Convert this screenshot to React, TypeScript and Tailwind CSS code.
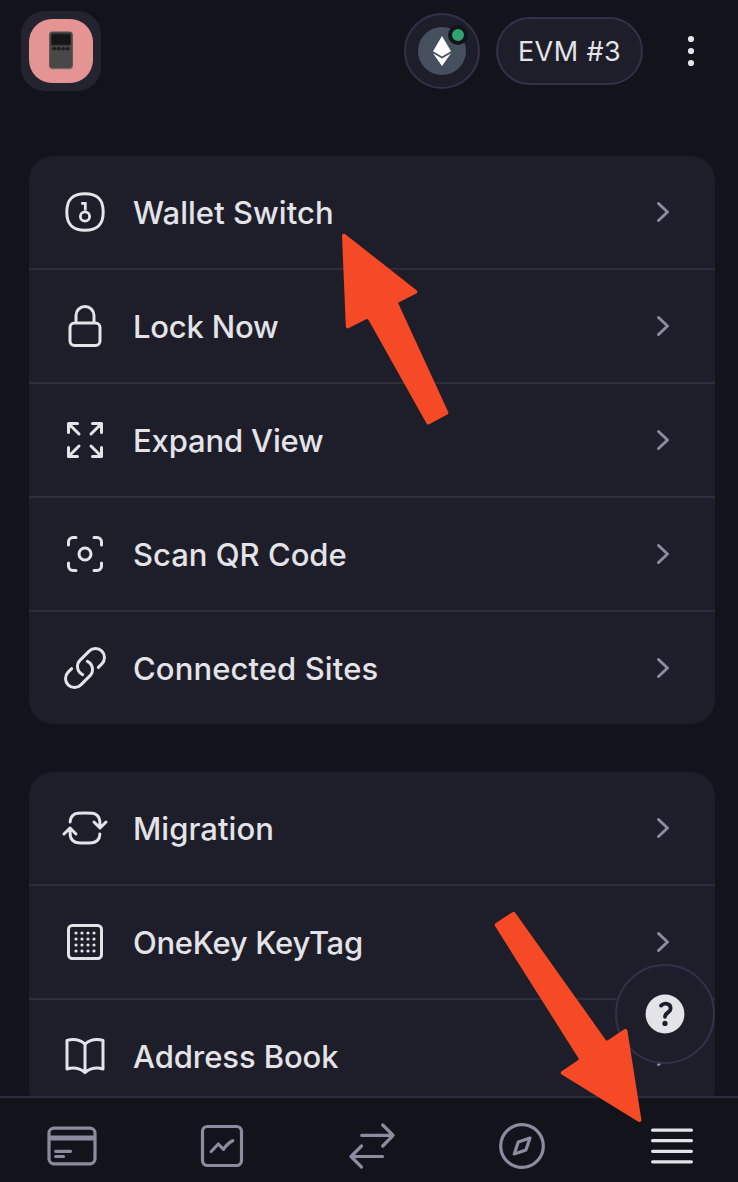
import type { ReactNode } from "react";

type Item = { label: string; icon: ReactNode; tracking: string };

function Outline({ d }: { d: string }) {
  return (
    <svg viewBox="0 0 24 24" fill="none" stroke="currentColor" strokeWidth="1.5" strokeLinecap="round" strokeLinejoin="round" className="size-12 shrink-0">
      <path d={d} />
    </svg>
  );
}

function WalletKeyIcon() {
  return (
    <svg viewBox="0 0 48 48" fill="none" stroke="currentColor" strokeWidth="3" className="size-12 shrink-0">
      <path d="M24 5.8C36.6 5.8 42.2 11.4 42.2 24S36.6 42.2 24 42.2 5.8 36.6 5.8 24 11.4 5.8 24 5.8Z" />
      <path d="M20.2 15.4H24.3V22.6" strokeWidth="2.8" />
      <circle cx="24" cy="28.5" r="4.6" strokeWidth="2.8" />
    </svg>
  );
}

function KeyTagIcon() {
  const offsets = [15, 21, 27, 33];
  return (
    <svg viewBox="0 0 48 48" fill="none" stroke="currentColor" strokeWidth="3" className="size-12 shrink-0">
      <rect x="7.5" y="7.5" width="33" height="33" rx="3.8" />
      <g fill="currentColor" stroke="none">
        {offsets.map((y) => offsets.map((x) => <circle key={`${x}-${y}`} cx={x} cy={y} r="1.6" />))}
      </g>
    </svg>
  );
}

const primary: Item[] = [
  { label: "Wallet Switch", icon: <WalletKeyIcon />, tracking: "tracking-[0.05px]" },
  {
    label: "Lock Now",
    tracking: "tracking-[-0.2px]",
    icon: <Outline d="M16.5 10.5V6.75a4.5 4.5 0 1 0-9 0v3.75m-.75 11.25h10.5a2.25 2.25 0 0 0 2.25-2.25v-6.75a2.25 2.25 0 0 0-2.25-2.25H6.75a2.25 2.25 0 0 0-2.25 2.25v6.75a2.25 2.25 0 0 0 2.25 2.25Z" />,
  },
  {
    label: "Expand View",
    tracking: "tracking-[-0.15px]",
    icon: <Outline d="M3.75 3.75v4.5m0-4.5h4.5m-4.5 0L9 9M3.75 20.25v-4.5m0 4.5h4.5m-4.5 0L9 15M20.25 3.75h-4.5m4.5 0v4.5m0-4.5L15 9m5.25 11.25h-4.5m4.5 0v-4.5m0 4.5L15 15" />,
  },
  {
    label: "Scan QR Code",
    tracking: "tracking-normal",
    icon: <Outline d="M7.5 3.75H6A2.25 2.25 0 0 0 3.75 6v1.5M16.5 3.75H18A2.25 2.25 0 0 1 20.25 6v1.5m0 9V18A2.25 2.25 0 0 1 18 20.25h-1.5m-9 0H6A2.25 2.25 0 0 1 3.75 18v-1.5M15 12a3 3 0 1 1-6 0 3 3 0 0 1 6 0Z" />,
  },
  {
    label: "Connected Sites",
    tracking: "tracking-[0.1px]",
    icon: <Outline d="M13.19 8.688a4.5 4.5 0 0 1 1.242 7.244l-4.5 4.5a4.5 4.5 0 0 1-6.364-6.364l1.757-1.757m13.35-.622 1.757-1.757a4.5 4.5 0 0 0-6.364-6.364l-4.5 4.5a4.5 4.5 0 0 0 1.242 7.244" />,
  },
];

const secondary: Item[] = [
  {
    label: "Migration",
    tracking: "tracking-[0.05px]",
    icon: <Outline d="M19.5 12c0-1.232-.046-2.453-.138-3.662a4.006 4.006 0 0 0-3.7-3.7 48.678 48.678 0 0 0-7.324 0 4.006 4.006 0 0 0-3.7 3.7c-.017.22-.032.441-.046.662M19.5 12l3-3m-3 3-3-3m-12 3c0 1.232.046 2.453.138 3.662a4.006 4.006 0 0 0 3.7 3.7 48.656 48.656 0 0 0 7.324 0 4.006 4.006 0 0 0 3.7-3.7c.017-.22.032-.441.046-.662M4.5 12l3 3m-3-3-3 3" />,
  },
  { label: "OneKey KeyTag", icon: <KeyTagIcon />, tracking: "tracking-[-0.3px]" },
  {
    label: "Address Book",
    tracking: "tracking-[-0.08px]",
    icon: <Outline d="M12 6.042A8.967 8.967 0 0 0 6 3.75c-1.052 0-2.062.18-3 .512v14.25A8.987 8.987 0 0 1 6 18c2.305 0 4.408.867 6 2.292m0-14.25a8.966 8.966 0 0 1 6-2.292c1.052 0 2.062.18 3 .512v14.25A8.987 8.987 0 0 0 18 18a8.967 8.967 0 0 0-6 2.292m0-14.25v14.25" />,
  },
];

function MenuCard({ items }: { items: Item[] }) {
  return (
    <div className="shrink-0 divide-y-2 divide-[#2d2d3d] overflow-hidden rounded-3xl bg-[#1e1e2a]">
      {items.map((item) => (
        <div key={item.label} className="box-content flex h-28 items-center">
          <div className="flex w-full items-center gap-6 px-8">
            {item.icon}
            <span className={`flex-1 whitespace-nowrap pt-px text-[31px] leading-12 font-medium ${item.tracking}`}>{item.label}</span>
            <svg viewBox="0 0 20 20" fill="none" stroke="#8c8ca1" strokeWidth="1.5" strokeLinecap="round" strokeLinejoin="round" className="size-10 shrink-0">
              <path d="M7.75 5.75 12.25 10l-4.5 4.25" />
            </svg>
          </div>
        </div>
      ))}
    </div>
  );
}

function Header() {
  return (
    <header className="flex h-[104px] shrink-0 items-start pl-[21px] pr-[27px]">
      <div className="mt-[11px] flex size-20 items-center justify-center rounded-3xl bg-[#242430]">
        <div className="flex size-16 items-center justify-center rounded-[23px] bg-[#e59494]">
          <svg viewBox="0 0 26 40" className="h-10 w-[26px]">
            <rect x="1" y="0.2" width="24" height="38" rx="4" fill="#77676a" />
            <rect x="1.5" y="1" width="23" height="36" rx="3" fill="#484848" />
            <rect x="3" y="2.6" width="20" height="12" rx="2" fill="#252525" />
            <rect x="4" y="3.8" width="18" height="9.5" rx="1" fill="#161616" />
            <g fill="#1d1d1d">
              <ellipse cx="6.2" cy="17.8" rx="2.1" ry="1.8" />
              <ellipse cx="10.7" cy="17.8" rx="2.1" ry="1.8" />
              <ellipse cx="15.2" cy="17.8" rx="2.1" ry="1.8" />
              <ellipse cx="19.7" cy="17.8" rx="2.1" ry="1.8" />
            </g>
          </svg>
        </div>
      </div>
      <div className="flex-1" />
      <div className="mt-[13px] flex size-[76px] items-center justify-center rounded-full border-2 border-[#35304a] bg-[#1e1e2a]">
        <div className="relative flex size-12 items-center justify-center rounded-full bg-[#454f5d]">
          <svg viewBox="0 0 18 30" fill="#fff" className="h-[30px] w-[18px]">
            <path d="M9 0 0 15.2l9 5.3 9-5.3Z" />
            <path d="M0 17.2 9 30l9-12.8-9 5.3Z" />
          </svg>
          <span className="absolute -top-0.5 -right-0.5 size-5 rounded-full border-4 border-[#13131b] bg-[#30a46c]" />
        </div>
      </div>
      <div className="mt-[17px] ml-4 flex h-[68px] w-[147px] items-center justify-center rounded-full border-2 border-[#35304a] bg-[#1e1e2a]">
        <span className="whitespace-nowrap pt-0.5 text-[27px] leading-10 font-normal tracking-[0.4px]">EVM #3</span>
      </div>
      <svg viewBox="0 0 40 40" fill="currentColor" className="mt-[31px] ml-7 size-10">
        <circle cx="20" cy="8" r="3.1" />
        <circle cx="20" cy="20" r="3.1" />
        <circle cx="20" cy="32" r="3.1" />
      </svg>
    </header>
  );
}

function Tab({ children, active = false }: { children: ReactNode; active?: boolean }) {
  return (
    <div className={`flex w-[150px] shrink-0 items-center justify-center ${active ? "text-[#e3e3e8]" : "text-[#8c8ca1]"}`}>
      <svg viewBox="-28 -28 56 56" fill="none" stroke="currentColor" strokeWidth="3.2" strokeLinecap="round" strokeLinejoin="round" className="size-14">
        {children}
      </svg>
    </div>
  );
}

function TabBar() {
  return (
    <nav className="flex h-[86px] shrink-0 border-t-2 border-[#2d2d3d] bg-[#13131b]">
      <div className="-ml-[3px] flex h-24 w-[750px] shrink-0">
        <Tab>
          <rect x="-23" y="-17.8" width="46" height="35.6" rx="5" />
          <path d="M-23-8H23" strokeWidth="5.2" strokeLinecap="butt" />
          <path d="M-16.3 5.3H-1.5M-16.3 10.5h7.8" strokeWidth="3.2" />
        </Tab>
        <Tab>
          <rect x="-19.5" y="-19.5" width="39" height="39" rx="5" />
          <path d="M-10.8 5.5-3.7-2 1.5 3.3C4-.5 7-3.5 10.8-5.3" />
        </Tab>
        <Tab>
          <path d="M-10.3-10.6H21M10.7-21 21.2-10.6 10.7 0M10.5 10.5H-21M-10.5 0-21 10.5-10.5 21" />
        </Tab>
        <Tab>
          <circle r="21.3" />
          <path d="M8-8-3.7-3.9-7.8 8 3.9 3.9Z" />
        </Tab>
        <Tab active>
          <path d="M-19.4-15.8h38.8M-19.4-5.3h38.8M-19.4 5.3h38.8M-19.4 15.8h38.8" />
        </Tab>
      </div>
    </nav>
  );
}

export default function App() {
  return (
    <div className="relative flex h-[1182px] w-[738px] flex-col overflow-hidden bg-[#13131b] font-['Inter',sans-serif] text-[#e3e3e8]">
      <Header />
      <main className="flex min-h-0 flex-1 flex-col gap-12 overflow-hidden pt-[52px] pr-[23px] pl-[29px]">
        <MenuCard items={primary} />
        <MenuCard items={secondary} />
      </main>
      <TabBar />
      <div className="absolute top-[964px] left-[615px] flex size-[100px] items-center justify-center rounded-full border-2 border-[#35304a] bg-[#1e1e2a]">
        <svg viewBox="-20 -20 40 40" className="size-10">
          <circle r="19.4" fill="#e3e3e8" />
          <path d="M-3.9-8.4C-1-11.6 5.6-10.8 5.6-5.8 5.6-1.2 0-1.6 0 2.8" fill="none" stroke="#1e1e2a" strokeWidth="3.8" strokeLinecap="round" />
          <circle cx="0" cy="9.4" r="2.6" fill="#1e1e2a" />
        </svg>
      </div>
      <svg viewBox="0 0 738 1182" fill="#f54a25" stroke="#f54a25" strokeWidth="4" strokeLinejoin="round" className="pointer-events-none absolute inset-0 h-[1182px] w-[738px]">
        <path d="M344 235.8 415.3 291.8 395.7 301.8Q396.5 304.5 398 307.5L446.3 412.7 428.3 422.5 371 320.2Q370 317.5 366.8 316.6L347.8 326.3Z" />
        <path d="M513.6 913.8 604.3 1041.3Q606.5 1043.6 609 1041.8L625.4 1030.8 639.4 1120 562.8 1072.8 578.4 1062.3Q582 1060 580 1057L496.7 925Z" />
      </svg>
    </div>
  );
}
